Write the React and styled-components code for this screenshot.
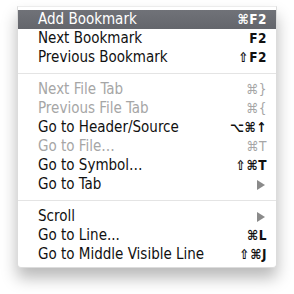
import React from 'react';
import styled, { createGlobalStyle } from 'styled-components';

const Global = createGlobalStyle`
  body {
    margin: 0;
    background: #fff;
  }
`;

const Page = styled.div`
  width: 294px;
  height: 294px;
  padding: 6px 0 0 17px;
  box-sizing: border-box;
`;

const Menu = styled.div`
  width: 260px;
  box-sizing: border-box;
  padding: 3px 0 3px;
  background: #fff;
  border: 1px solid #dcdcdc;
  border-top-color: #ececec;
  border-radius: 0 0 4px 4px;
  box-shadow: 0 10px 16px rgba(0, 0, 0, 0.28);
  font-family: "DejaVu Sans Condensed", "DejaVu Sans", sans-serif;
`;

const Row = styled.div`
  height: 19px;
  box-sizing: border-box;
  display: flex;
  align-items: center;
  justify-content: space-between;
  padding: 0 9px 1px 20px;
  font-size: 15px;
  color: ${p => (p.$active ? '#fff' : p.$disabled ? '#a6a6a6' : '#111')};
  background: ${p => (p.$active ? 'linear-gradient(#707278, #64666c)' : 'transparent')};
`;

const Label = styled.span`
  white-space: nowrap;
`;

const Keys = styled.span`
  font-size: 13.5px;
  font-weight: ${p => (p.$disabled ? 'normal' : 'bold')};
  letter-spacing: 0.5px;
  white-space: nowrap;
`;

const Arrow = styled.span`
  width: 0;
  height: 0;
  margin: 1px 2px 0 0;
  border-top: 5px solid transparent;
  border-bottom: 5px solid transparent;
  border-left: 8px solid #8a8a8a;
`;

const Separator = styled.div`
  height: 13px;
  display: flex;
  align-items: center;

  &::after {
    content: '';
    flex: 1;
    height: 1px;
    background: #e4e4e4;
  }
`;

const groups = [
  [
    { label: 'Add Bookmark', keys: '⌘F2', active: true },
    { label: 'Next Bookmark', keys: 'F2' },
    { label: 'Previous Bookmark', keys: '⇧F2' },
  ],
  [
    { label: 'Next File Tab', keys: '⌘}', disabled: true },
    { label: 'Previous File Tab', keys: '⌘{', disabled: true },
    { label: 'Go to Header/Source', keys: '⌥⌘↑' },
    { label: 'Go to File…', keys: '⌘T', disabled: true },
    { label: 'Go to Symbol…', keys: '⇧⌘T' },
    { label: 'Go to Tab', submenu: true },
  ],
  [
    { label: 'Scroll', submenu: true },
    { label: 'Go to Line...', keys: '⌘L' },
    { label: 'Go to Middle Visible Line', keys: '⇧⌘J' },
  ],
];

export default function App() {
  return (
    <Page>
      <Global />
      <Menu>
        {groups.map((items, g) => (
          <React.Fragment key={g}>
            {g > 0 && <Separator />}
            {items.map(item => (
              <Row key={item.label} $active={item.active} $disabled={item.disabled}>
                <Label>{item.label}</Label>
                {item.submenu ? <Arrow /> : <Keys $disabled={item.disabled}>{item.keys}</Keys>}
              </Row>
            ))}
          </React.Fragment>
        ))}
      </Menu>
    </Page>
  );
}
